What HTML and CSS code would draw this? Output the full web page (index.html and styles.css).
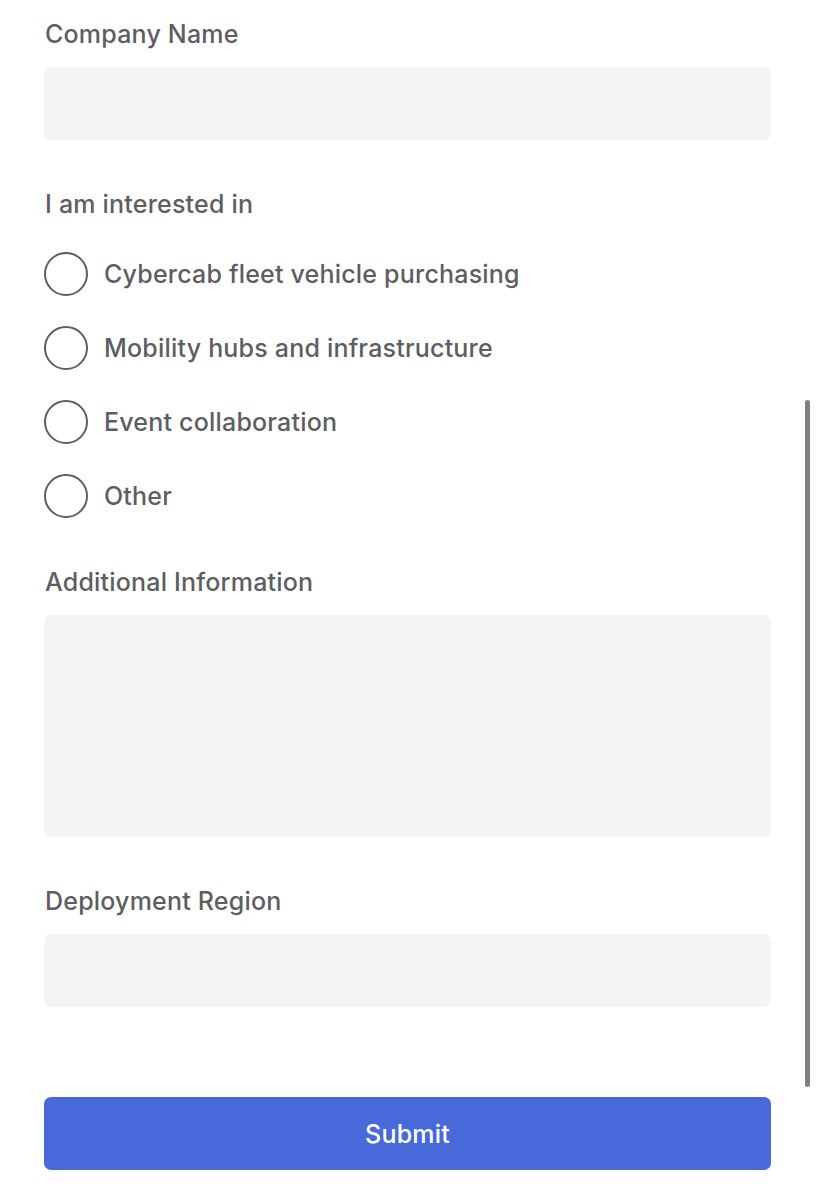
FILE: index.html
```html
<!DOCTYPE html>
<html lang="en">
<head>
    <meta charset="UTF-8">
    <meta name="viewport" content="width=device-width, initial-scale=1.0">
    <title>Contact</title>
    <link rel="stylesheet" href="styles.css">
</head>
<body>
    <form class="formulario">
        <div class="campo">
            <label class="rotulo">Company Name</label>
            <input type="text" class="entrada">
        </div>

        <div class="campo">
            <div class="rotulo">I am interested in</div>
            <div class="opcoes">
                <label class="opcao"><span class="radio"></span>Cybercab fleet vehicle purchasing</label>
                <label class="opcao"><span class="radio"></span>Mobility hubs and infrastructure</label>
                <label class="opcao"><span class="radio"></span>Event collaboration</label>
                <label class="opcao"><span class="radio"></span>Other</label>
            </div>
        </div>

        <div class="campo">
            <label class="rotulo">Additional Information</label>
            <textarea class="entrada area"></textarea>
        </div>

        <div class="campo">
            <label class="rotulo">Deployment Region</label>
            <input type="text" class="entrada">
        </div>

        <button type="button" class="enviar">Submit</button>
    </form>

    <div class="barra"></div>
</body>
</html>
```

FILE: styles.css
```css
body {
    margin: 0;
    background: #fff;
    font-family: Inter, "Noto Sans", sans-serif;
    color: #5c5e62;
}

.formulario {
    width: 727px;
    padding: 18px 0 0 44px;
}

.campo {
    margin-bottom: 48px;
}

.rotulo {
    display: block;
    font-size: 25px;
    font-weight: 500;
    letter-spacing: 0.2px;
    line-height: 32px;
    padding-left: 1px;
    margin-bottom: 17px;
}

.entrada {
    display: block;
    box-sizing: border-box;
    width: 100%;
    height: 73px;
    border: none;
    border-radius: 7px;
    background: #f4f4f4;
    margin: 0;
}

.area {
    height: 222px;
    resize: none;
}

.opcoes {
    display: flex;
    flex-direction: column;
    gap: 30px;
    padding-top: 15px;
}

.opcao {
    display: flex;
    align-items: center;
    gap: 16px;
    font-size: 25px;
    font-weight: 500;
    letter-spacing: 0.2px;
    height: 44px;
}

.radio {
    box-sizing: border-box;
    width: 44px;
    height: 44px;
    border: 2px solid #5c5e62;
    border-radius: 50%;
}

.enviar {
    display: block;
    width: 100%;
    height: 73px;
    margin-top: 90px;
    border: none;
    border-radius: 7px;
    background: #4769d9;
    color: #fff;
    font-family: Inter, "Noto Sans", sans-serif;
    font-size: 25px;
    font-weight: 500;
    letter-spacing: 0.2px;
}

.barra {
    position: absolute;
    top: 400px;
    left: 805px;
    width: 5px;
    height: 687px;
    border-radius: 3px;
    background: #808080;
}
```
